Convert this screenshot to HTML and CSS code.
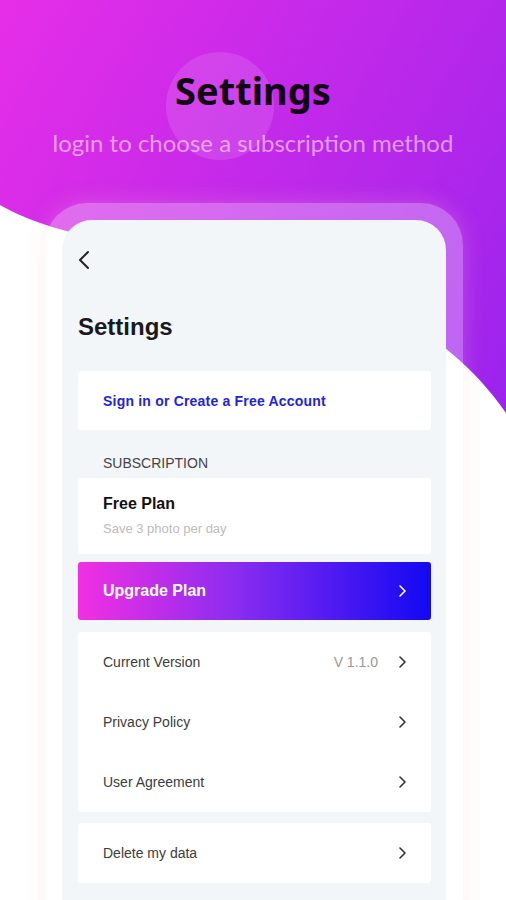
FILE: index.html
```html
<!DOCTYPE html>
<html lang="en">
<head>
    <meta charset="UTF-8">
    <meta name="viewport" content="width=device-width, initial-scale=1.0">
    <title>Settings</title>
    <link rel="stylesheet" href="styles.css">
</head>
<body>
    <!-- white wave behind the phone -->
    <svg class="wave" width="506" height="900" viewBox="0 0 506 900">
        <path d="M0,205 C120,275 380,230 506,413 L506,900 L0,900 Z" fill="#ffffff"/>
    </svg>

    <header class="hero">
        <div class="hero-circle"></div>
        <h1 class="hero-title">Settings</h1>
        <p class="hero-sub">login to choose a subscription method</p>
    </header>

    <div class="phone">
        <div class="screen">
            <div class="back">
                <svg width="12" height="20" viewBox="0 0 12 20">
                    <polyline points="10,2 2,10 10,18" fill="none" stroke="#222" stroke-width="2" stroke-linecap="round" stroke-linejoin="round"/>
                </svg>
            </div>

            <h2 class="page-title">Settings</h2>

            <div class="card signin">Sign in or Create a Free Account</div>

            <div class="section-label">SUBSCRIPTION</div>

            <div class="card plan">
                <div class="plan-name">Free Plan</div>
                <div class="plan-desc">Save 3 photo per day</div>
            </div>

            <div class="upgrade">
                <span>Upgrade Plan</span>
                <svg class="chev" width="8" height="14" viewBox="0 0 8 14">
                    <polyline points="2,2 7,7 2,12" fill="none" stroke="#fff" stroke-width="1.6" stroke-linecap="round" stroke-linejoin="round"/>
                </svg>
            </div>

            <div class="card list">
                <div class="row">
                    <span class="row-label">Current Version</span>
                    <span class="row-value">V 1.1.0</span>
                    <svg class="chev" width="8" height="14" viewBox="0 0 8 14">
                        <polyline points="2,2 7,7 2,12" fill="none" stroke="#333" stroke-width="1.6" stroke-linecap="round" stroke-linejoin="round"/>
                    </svg>
                </div>
                <div class="row">
                    <span class="row-label">Privacy Policy</span>
                    <svg class="chev" width="8" height="14" viewBox="0 0 8 14">
                        <polyline points="2,2 7,7 2,12" fill="none" stroke="#333" stroke-width="1.6" stroke-linecap="round" stroke-linejoin="round"/>
                    </svg>
                </div>
                <div class="row">
                    <span class="row-label">User Agreement</span>
                    <svg class="chev" width="8" height="14" viewBox="0 0 8 14">
                        <polyline points="2,2 7,7 2,12" fill="none" stroke="#333" stroke-width="1.6" stroke-linecap="round" stroke-linejoin="round"/>
                    </svg>
                </div>
            </div>

            <div class="card list">
                <div class="row">
                    <span class="row-label">Delete my data</span>
                    <svg class="chev" width="8" height="14" viewBox="0 0 8 14">
                        <polyline points="2,2 7,7 2,12" fill="none" stroke="#333" stroke-width="1.6" stroke-linecap="round" stroke-linejoin="round"/>
                    </svg>
                </div>
            </div>
        </div>
    </div>
</body>
</html>
```

FILE: styles.css
```css
html, body {
    margin: 0;
    padding: 0;
}

body {
    width: 506px;
    height: 900px;
    overflow: hidden;
    position: relative;
    background: linear-gradient(120deg, #e62ee8 0%, #b828ea 45%, #7e1ff0 100%);
    font-family: "Liberation Sans", Arial, sans-serif;
}

.wave {
    position: absolute;
    left: 0;
    top: 0;
}

/* header */
.hero {
    position: relative;
    padding-top: 68px;
    text-align: center;
    font-family: Lato, "Noto Sans", sans-serif;
}

.hero-circle {
    position: absolute;
    left: 166px;
    top: 52px;
    width: 108px;
    height: 108px;
    border-radius: 50%;
    background: rgba(255, 255, 255, 0.12);
}

.hero-title {
    position: relative;
    margin: 0;
    font-family: "Noto Sans", sans-serif;
    font-size: 38px;
    line-height: 44px;
    font-weight: 700;
    font-variant-ligatures: none;
    color: #120812;
}

.hero-sub {
    position: relative;
    margin: 16px 0 0;
    font-size: 24px;
    line-height: 30px;
    color: rgba(255, 255, 255, 0.55);
}

/* phone frame */
.phone {
    position: relative;
    margin: 45px 0 0 45px;
    width: 384px;
    padding: 17px 17px 0;
    border-radius: 42px 42px 0 0;
    background: rgba(255, 255, 255, 0.3);
    box-shadow: 0 0 22px rgba(250, 200, 200, 0.25);
}

.screen {
    background: #f2f6f9;
    border-radius: 30px 30px 0 0;
    padding: 30px 15px 40px 16px;
}

.back {
    height: 20px;
}

.back svg {
    display: block;
}

.page-title {
    margin: 42px 0 29px;
    font-size: 24px;
    line-height: 30px;
    font-weight: 700;
    color: #1a1a1a;
}

.card {
    background: #fff;
    border-radius: 3px;
}

.signin {
    height: 59px;
    padding-left: 25px;
    display: flex;
    align-items: center;
    font-size: 14px;
    font-weight: 700;
    letter-spacing: 0.2px;
    color: #2024e2;
}

.section-label {
    margin: 23px 0 5px 25px;
    font-size: 14px;
    line-height: 20px;
    color: #444;
}

.plan {
    padding: 15px 25px 16px;
}

.plan-name {
    font-size: 16px;
    line-height: 22px;
    font-weight: 700;
    color: #111;
}

.plan-desc {
    margin-top: 5px;
    font-size: 13px;
    line-height: 18px;
    color: #bcbcbc;
}

.upgrade {
    margin-top: 8px;
    height: 58px;
    padding: 0 25px;
    display: flex;
    align-items: center;
    justify-content: space-between;
    border-radius: 3px;
    background: linear-gradient(90deg, #f22fe2 0%, #8a2cf0 45%, #1308f3 100%);
    font-size: 16px;
    font-weight: 700;
    color: #fff;
}

.list {
    margin-top: 12px;
}

.list + .list {
    margin-top: 11px;
}

.row {
    height: 60px;
    padding: 0 25px;
    display: flex;
    align-items: center;
    font-size: 14px;
    color: #3c3c3c;
}

.row-label {
    flex: 1;
}

.row-value {
    margin-right: 20px;
    color: #9a9a9a;
}

.chev {
    display: block;
}
```
